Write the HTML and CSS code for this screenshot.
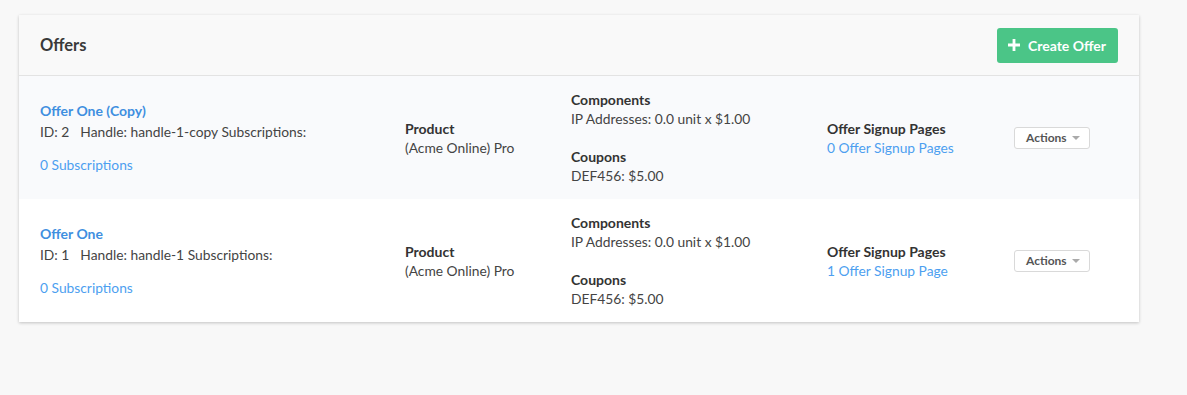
FILE: index.html
```html
<!DOCTYPE html>
<html lang="en">
<head>
  <meta charset="UTF-8" />
  <title>Offers</title>
  <link rel="stylesheet" href="styles.css">
</head>
<body>
<main class="card">
  <header class="card-header">
    <h1>Offers</h1>
    <a href="#" class="btn-create">
      <svg width="12" height="12" viewBox="0 0 12 12" aria-hidden="true">
        <path d="M4.6 0h2.8v4.6H12v2.8H7.4V12H4.6V7.4H0V4.6h4.6z" fill="#fff"/>
      </svg>
      Create Offer
    </a>
  </header>

  <div class="offer-row shaded">
    <div class="col-offer">
      <a href="#" class="offer-name">Offer One (Copy)</a>
      <div class="offer-meta"><span class="meta-id">ID: 2</span>Handle: handle-1-copy Subscriptions:</div>
      <a href="#" class="link subs">0 Subscriptions</a>
    </div>
    <div class="col">
      <div class="label">Product</div>
      <div>(Acme Online) Pro</div>
    </div>
    <div class="col">
      <div class="label">Components</div>
      <div>IP Addresses: 0.0 unit x $1.00</div>
      <div class="label gap">Coupons</div>
      <div>DEF456: $5.00</div>
    </div>
    <div class="col">
      <div class="label">Offer Signup Pages</div>
      <a href="#" class="link">0 Offer Signup Pages</a>
    </div>
    <div class="col-actions">
      <button class="btn-actions">Actions <span class="caret"></span></button>
    </div>
  </div>

  <div class="offer-row">
    <div class="col-offer">
      <a href="#" class="offer-name">Offer One</a>
      <div class="offer-meta"><span class="meta-id">ID: 1</span>Handle: handle-1 Subscriptions:</div>
      <a href="#" class="link subs">0 Subscriptions</a>
    </div>
    <div class="col">
      <div class="label">Product</div>
      <div>(Acme Online) Pro</div>
    </div>
    <div class="col">
      <div class="label">Components</div>
      <div>IP Addresses: 0.0 unit x $1.00</div>
      <div class="label gap">Coupons</div>
      <div>DEF456: $5.00</div>
    </div>
    <div class="col">
      <div class="label">Offer Signup Pages</div>
      <a href="#" class="link">1 Offer Signup Page</a>
    </div>
    <div class="col-actions">
      <button class="btn-actions">Actions <span class="caret"></span></button>
    </div>
  </div>
</main>
</body>
</html>
```

FILE: styles.css
```css
:root {
  --page-bg: #f8f8f8;
  --text: #444;
  --label: #333;
  --blue: #3f8fe0;
  --link: #4d9ff0;
  --green: #4bc587;
  --line: #e3e3e3;
}

body {
  margin: 0;
  padding: 15px 19px;
  font-family: Lato, 'Open Sans', sans-serif;
  font-size: 13.8px;
  line-height: 19px;
  color: var(--text);
  background: var(--page-bg);
}

.card {
  width: 1120px;
  background: #fff;
  box-shadow: 0 1px 3px rgba(0, 0, 0, 0.22);
}

.card-header {
  display: flex;
  justify-content: space-between;
  align-items: center;
  height: 60px;
  padding: 0 21px;
  background: #f9f9f9;
  border-bottom: 1px solid var(--line);
}

.card-header h1 {
  margin: 0;
  font-size: 16.5px;
  font-weight: 700;
  color: #3a3a3a;
}

.btn-create {
  display: flex;
  align-items: center;
  gap: 8px;
  height: 35px;
  padding: 0 12px 0 11px;
  background: var(--green);
  color: #fff;
  border-radius: 3px;
  font-size: 14px;
  font-weight: 700;
  text-decoration: none;
}

.offer-row {
  display: grid;
  grid-template-columns: 365px 166px 256px 187px 1fr;
  align-items: center;
  box-sizing: border-box;
  height: 123px;
  padding: 0 21px;
}

.offer-row.shaded {
  background: #f9fafc;
}

.col-offer {
  display: flex;
  flex-direction: column;
  align-items: flex-start;
}

.offer-name {
  font-size: 14px;
  font-weight: 700;
  line-height: 20px;
  color: var(--blue);
  text-decoration: none;
}

.offer-meta {
  line-height: 21px;
}

.meta-id {
  margin-right: 11px;
}

.link {
  color: var(--link);
  text-decoration: none;
}

.subs {
  margin-top: 13px;
}

.label {
  font-size: 14px;
  font-weight: 700;
  color: var(--label);
}

.label.gap {
  margin-top: 19px;
}

.btn-actions {
  display: flex;
  align-items: center;
  gap: 5px;
  height: 22px;
  padding: 0 9px 0 11px;
  background: #fff;
  border: 1px solid #d9d9d9;
  border-radius: 3px;
  font-family: inherit;
  font-size: 12px;
  font-weight: 700;
  color: #555;
  cursor: pointer;
}

.caret {
  width: 0;
  height: 0;
  border-left: 4px solid transparent;
  border-right: 4px solid transparent;
  border-top: 4px solid #aaa;
}
```
